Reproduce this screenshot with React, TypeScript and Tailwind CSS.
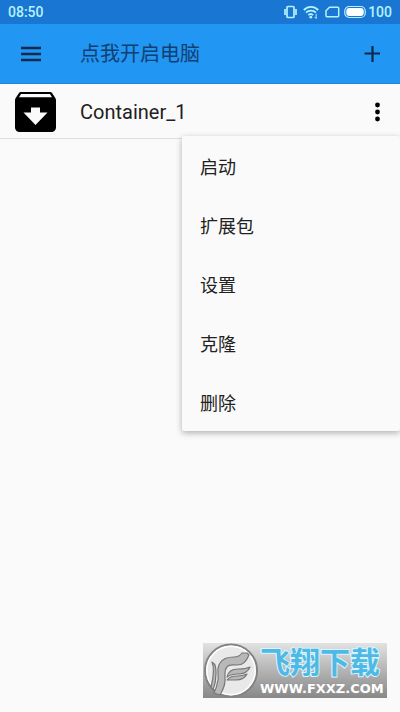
const menuItems = ["启动", "扩展包", "设置", "克隆", "删除"];

function StatusBar() {
  return (
    <div className="flex h-6 items-center justify-between bg-[#1976d2] px-2 text-[#b5f2fb]">
      <span className="text-sm font-medium leading-6">08:50</span>
      <div className="flex items-center">
        <svg className="mr-1.5" width="13" height="14" viewBox="0 0 13 14" fill="none" stroke="currentColor" strokeWidth="1.7" aria-label="Vibrate">
          <rect x="3" y="1.5" width="7" height="11" rx="1" />
          <path d="M1 4v6M12 4v6" />
        </svg>
        <svg className="mr-1.5" width="16" height="14" viewBox="0 0 16 14" fill="none" stroke="currentColor" strokeWidth="1.8" aria-label="Wi-Fi">
          <path d="M.8 5C5 .8 11 .8 15.2 5M3 7.7c2.7-2.7 7.3-2.7 10 0M5.3 10.2c1.4-1.4 3.4-1.4 4.8 0" />
          <circle cx="7.8" cy="12.2" r="1.4" fill="currentColor" stroke="none" />
          <path d="M13.2 9v4.5M11.6 12l1.6 1.6" strokeWidth="1" />
        </svg>
        <svg className="mr-1" width="15" height="14" viewBox="0 0 15 14" fill="none" stroke="currentColor" strokeWidth="1.5" aria-label="SIM">
          <path d="M4.5 2.2h8.2c.7 0 1 .4 1 1v7.6c0 .6-.3 1-1 1H2c-.7 0-1-.4-1-1V5.7z" />
        </svg>
        <svg className="mr-0.5" width="22" height="14" viewBox="0 0 22 14" aria-label="Battery">
          <rect x="0.75" y="1.5" width="20.5" height="11" rx="4.5" fill="none" stroke="currentColor" strokeWidth="1.2" />
          <rect x="2.3" y="3" width="17.4" height="8" rx="3" fill="#fff" />
        </svg>
        <span className="text-sm font-medium leading-6">100</span>
      </div>
    </div>
  );
}

function AppBar() {
  return (
    <header className="flex h-[60px] items-center border-b border-[#2a84cf] bg-[#2196f3] px-5 text-[#10294d]">
      <button type="button" aria-label="Menu" className="flex w-[60px] items-center">
        <svg width="22" height="16" viewBox="0 0 22 16" fill="currentColor">
          <path d="M1 .8h20v2.4H1zM1 6.8h20v2.4H1zM1 12.8h20v2.4H1z" />
        </svg>
      </button>
      <h1 className="flex-1 text-xl font-normal text-[#123f72]">点我开启电脑</h1>
      <button type="button" aria-label="Add">
        <svg width="16" height="16" viewBox="0 0 16 16" stroke="currentColor" strokeWidth="2.2">
          <path d="M8.5 0v16M.5 7.500h16" />
        </svg>
      </button>
    </header>
  );
}

function PopupMenu() {
  return (
    <ul className="absolute right-0 top-[52px] z-10 w-[218px] rounded-xs bg-[#fafafa] shadow-[0_2px_6px_rgba(0,0,0,0.3)]">
      {menuItems.map((item) => (
        <li key={item}>
          <button type="button" className="flex h-[59px] w-full items-center px-[18px] pt-1 text-left text-lg text-[#212121]">
            {item}
          </button>
        </li>
      ))}
    </ul>
  );
}

function ContainerRow() {
  return (
    <div className="relative flex h-[55px] items-center border-b border-[#dedede] px-[15px] pt-0.5 text-black">
      <svg className="mr-6" width="41" height="42" viewBox="0 0 41 42" aria-hidden="true">
        <path
          fillRule="evenodd"
          fill="#000"
          d="M6 1h29c1 0 1.700.5 2.200 1.200L40 6.400c.6.8 1 1.700 1 2.800V36.500a4.500 4.500 0 0 1-4.500 4.500h-32A4.500 4.500 0 0 1 0 36.500V9.200c0-1.100.4-2 1-2.800L3.800 2.200C4.300 1.500 5 1 6 1zM6 3L4 6.200h33L35 3zM16 16.500V21.500H8.500l12 12.500 12-12.500H25v-5z"
        />
      </svg>
      <span className="flex-1 text-xl text-[#212121]">Container_1</span>
      <button type="button" aria-label="More" className="px-1">
        <svg width="7" height="20" viewBox="0 0 7 20" fill="currentColor">
          <circle cx="3.5" cy="3" r="2.4" />
          <circle cx="3.5" cy="10" r="2.4" />
          <circle cx="3.5" cy="17" r="2.4" />
        </svg>
      </button>
      <PopupMenu />
    </div>
  );
}

function Watermark() {
  return (
    <div className="absolute bottom-[14px] right-[13px] flex h-[55px] w-[184px] items-center bg-linear-to-b from-[#e2e2e2] to-[#888888]">
      <svg className="shrink-0" width="56" height="55" viewBox="0 0 56 55" aria-hidden="true">
        <circle cx="28" cy="27.5" r="26" fill="#e9e9e9" stroke="#828282" strokeWidth="2" />
        <circle cx="28" cy="27.5" r="24.2" fill="none" stroke="#fff" strokeWidth="1.4" />
        <g fill="#b8b8b8" stroke="#777" strokeWidth="1.2" strokeLinejoin="round">
          <path d="M44 10l-5 0c-2 3-4 4-8 4-6 0-11 1-14 6-4 6-1 11-2 17-1 6-2 9-4 13l6 2c3-5 5-9 5-15 0-6-1-10 2-13 2-3 6-2 10-2 6 0 9-3 12-10z" />
          <path d="M9 19c4 2 4 7 4 12 0 6-1 11-3 16l-2-3c2-8 4-18 1-25z" />
          <path d="M47 24c-4 2-8 2-12 2-6 0-10 3-11 8 4-3 7-3 11-3 6 0 10-2 12-7z" />
          <path d="M44 31c-4 2-7 2-10 2-5 0-8 1-10 4 3 0 5 0 9 0 5 0 9-2 11-6z" />
        </g>
      </svg>
      <div className="flex flex-col whitespace-nowrap pl-px">
        <span className="text-[30px] font-bold leading-9 text-[#4fb9e6] [paint-order:stroke_fill] [-webkit-text-stroke:2px_#d9f5ff]">飞翔下载</span>
        <span className="font-['DejaVu_Sans'] text-[13px] font-bold leading-4 text-white [paint-order:stroke_fill] [-webkit-text-stroke:1px_#999999]">WWW.FXXZ.COM</span>
      </div>
    </div>
  );
}

export default function App() {
  return (
    <div className="relative min-h-screen bg-[#fafafa] font-[Roboto,'Noto_Sans_CJK_SC',sans-serif]">
      <StatusBar />
      <AppBar />
      <main>
        <ContainerRow />
      </main>
      <Watermark />
    </div>
  );
}
